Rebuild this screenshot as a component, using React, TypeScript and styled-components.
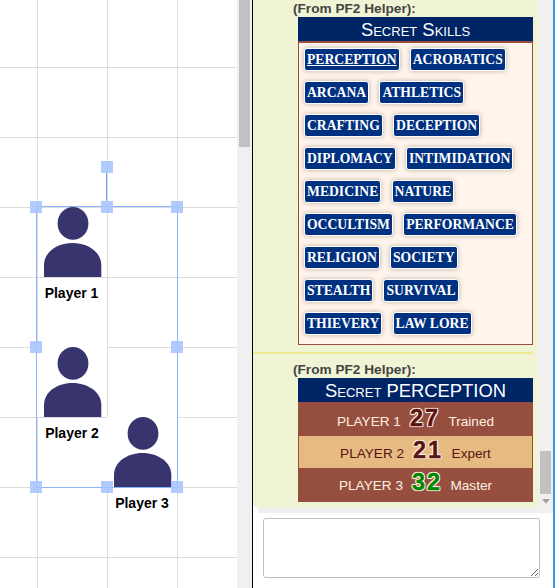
import React from "react";
import styled, { createGlobalStyle } from "styled-components";

const GlobalStyle = createGlobalStyle`
  * { box-sizing: border-box; }
  body { margin: 0; background: #fff; font-family: "Liberation Sans", Arial, sans-serif; }
`;

const Page = styled.div`
  display: flex;
  width: 555px;
  height: 588px;
  overflow: hidden;
`;

const Board = styled.div`
  position: relative;
  flex: 0 0 237px;
  overflow: hidden;
  background-color: #fff;
  background-image:
    linear-gradient(to right, #dcdcdc 1px, transparent 1px),
    linear-gradient(to bottom, #dcdcdc 1px, transparent 1px);
  background-size: 70px 70px;
  background-position: 37px 67px;
`;

const Token = styled.div<{ $x: number; $y: number; $opaque?: boolean }>`
  position: absolute;
  left: ${(p) => p.$x}px;
  top: ${(p) => p.$y}px;
  width: 70px;
  height: 70px;
  background: ${(p) => (p.$opaque ? "#fff" : "transparent")};
  svg { display: block; }
`;

const TokenName = styled.div`
  padding-top: 8px;
  font-size: 14px;
  line-height: 16px;
  font-weight: bold;
  text-align: center;
  white-space: nowrap;
  color: #000;
`;

const Selection = styled.div`
  position: absolute;
  left: 36px;
  top: 206px;
  width: 142px;
  height: 282px;
  border: 1px solid #8db3fb;
`;

const Stalk = styled.div`
  position: absolute;
  left: 106px;
  top: 173px;
  width: 1px;
  height: 28px;
  background: #71a0fa;
`;

const Handle = styled.div<{ $x: number; $y: number }>`
  position: absolute;
  left: ${(p) => p.$x}px;
  top: ${(p) => p.$y}px;
  width: 12px;
  height: 12px;
  background: rgba(166, 196, 254, 0.88);
`;

const BoardScroll = styled.div`
  flex: 0 0 15px;
  padding: 0 2px;
  background: #f0f0f0;
`;

const BoardThumb = styled.div`
  height: 147px;
  background: #c1c1c1;
`;

const Sidebar = styled.div`
  flex: 1;
  display: flex;
  flex-direction: column;
  border-left: 1px solid #000;
  border-right: 2px solid #3399ea;
`;

const ChatArea = styled.div`
  display: flex;
  height: 513px;
  background: linear-gradient(#fff, #fff) 0 100% / 5px 9px no-repeat #f0f0f0;
`;

const Messages = styled.div`
  width: 285px;
  height: 508px;
  background: #f0f4d4;
  border-radius: 0 0 0 5px;
`;

const Message = styled.section<{ $second?: boolean }>`
  width: 280px;
  height: ${(p) => (p.$second ? "154px" : "354px")};
  padding: ${(p) => (p.$second ? "7px" : "0")} 0 0 45px;
  border-bottom: ${(p) => (p.$second ? "0" : "2px solid #efeb8e")};
`;

const Sender = styled.div`
  height: 17px;
  margin-left: -5px;
  font-size: 13.65px;
  line-height: 18px;
  font-weight: bold;
  color: #444;
`;

const CardTitle = styled.h2`
  height: 24px;
  margin: 0;
  font-size: 18.4px;
  line-height: 26px;
  font-weight: normal;
  font-variant: small-caps;
  text-align: center;
  color: #fff;
  background: #002566;
`;

const SkillList = styled.div`
  display: flex;
  flex-direction: column;
  gap: 10px;
  height: 304px;
  padding: 5px 5px 0;
  border: 1px solid #964f3e;
  border-top-width: 2px;
  background: #fff5ec;
`;

const SkillRow = styled.div`
  display: flex;
  gap: 10.2px;
`;

const Skill = styled.span<{ $active?: boolean }>`
  height: 23px;
  padding: 0 2px;
  border: 1px solid #fff;
  border-radius: 3px;
  font: bold 13.67px/21px "Liberation Serif", "Times New Roman", serif;
  white-space: nowrap;
  text-decoration: ${(p) => (p.$active ? "underline" : "none")};
  color: #fff;
  background: #003080;
  box-shadow: 0 0 5px rgba(60, 50, 40, 0.35);
`;

const Results = styled.div`
  border: 1px solid #964f3e;
  border-top: 0;
`;

const Result = styled.div<{ $light?: boolean; $height: number; $line: number }>`
  display: flex;
  justify-content: center;
  align-items: baseline;
  height: ${(p) => p.$height}px;
  font-size: 13.6px;
  line-height: ${(p) => p.$line}px;
  color: ${(p) => (p.$light ? "#5b1212" : "#fff0e2")};
  background: ${(p) => (p.$light ? "#e5bb82" : "#964f3e")};
`;

const Score = styled.strong<{ $critical?: boolean }>`
  margin: 0 8.5px 0 9px;
  font-size: 23.4px;
  letter-spacing: 2px;
  color: ${(p) => (p.$critical ? "#008800" : "#5b1212")};
  -webkit-text-stroke: 0.4px ${(p) => (p.$critical ? "#008800" : "#5b1212")};
  text-shadow: -1px 0 1px #fff0e2, 1px 0 1px #fff0e2, 0 -1px 1px #fff0e2, 0 1px 1px #fff0e2,
    -1px -1px 0 #fff0e2, 1px -1px 0 #fff0e2, -1px 1px 0 #fff0e2, 1px 1px 0 #fff0e2;
`;

const ChatScroll = styled.div`
  display: flex;
  flex-direction: column;
  align-items: center;
  justify-content: flex-end;
  flex: 1;
  padding-bottom: 9px;
`;

const ChatThumb = styled.div`
  width: 11px;
  height: 43px;
  margin-bottom: 5px;
  background: #c1c1c1;
`;

const Composer = styled.div`
  flex: 1;
  padding: 5px 0 0 10px;
  background: #fff;
`;

const Input = styled.textarea`
  display: block;
  width: 277px;
  height: 60px;
  border: 1px solid #bfbfbf;
  border-radius: 3px;
  outline: 0;
  resize: both;
`;

const skillRows = [
  ["PERCEPTION", "ACROBATICS"],
  ["ARCANA", "ATHLETICS"],
  ["CRAFTING", "DECEPTION"],
  ["DIPLOMACY", "INTIMIDATION"],
  ["MEDICINE", "NATURE"],
  ["OCCULTISM", "PERFORMANCE"],
  ["RELIGION", "SOCIETY"],
  ["STEALTH", "SURVIVAL"],
  ["THIEVERY", "LAW LORE"],
];

const players = [
  { name: "Player 1", x: 36.5, y: 207, opaque: false },
  { name: "Player 2", x: 37, y: 347, opaque: true },
  { name: "Player 3", x: 107, y: 417, opaque: true },
];

const results = [
  { name: "PLAYER 1", score: 27, rank: "Trained", height: 34, line: 32 },
  { name: "PLAYER 2", score: 21, rank: "Expert", light: true, height: 32, line: 28 },
  { name: "PLAYER 3", score: 32, rank: "Master", critical: true, height: 33, line: 28 },
];

const handles = [
  [100.6, 161], [30.4, 201], [100.6, 201], [171, 201],
  [30.4, 341], [171, 341], [30.4, 481], [100.6, 481], [171, 481],
];

function Person() {
  return (
    <svg width="70" height="70" viewBox="0 0 70 70" fill="#37346e">
      <ellipse cx="36" cy="16.4" rx="15.4" ry="16.4" />
      <path d="M7 70V58C7 45.5 19.5 36 35.5 36S64.3 45.5 64.3 58V70Z" />
    </svg>
  );
}

export default function App() {
  return (
    <>
      <GlobalStyle />
      <Page>
        <Board>
          {players.map((p) => (
            <Token key={p.name} $x={p.x} $y={p.y} $opaque={p.opaque}>
              <Person />
              <TokenName>{p.name}</TokenName>
            </Token>
          ))}
          <Selection />
          <Stalk />
          {handles.map(([x, y]) => <Handle key={`${x}-${y}`} $x={x} $y={y} />)}
        </Board>
        <BoardScroll><BoardThumb /></BoardScroll>
        <Sidebar>
          <ChatArea>
            <Messages>
              <Message>
                <Sender>(From PF2 Helper):</Sender>
                <CardTitle>Secret Skills</CardTitle>
                <SkillList>
                  {skillRows.map((row) => (
                    <SkillRow key={row[0]}>
                      {row.map((s) => <Skill key={s} $active={s === "PERCEPTION"}>{s}</Skill>)}
                    </SkillRow>
                  ))}
                </SkillList>
              </Message>
              <Message $second>
                <Sender>(From PF2 Helper):</Sender>
                <CardTitle>Secret PERCEPTION</CardTitle>
                <Results>
                  {results.map((r) => (
                    <Result key={r.name} $light={r.light} $height={r.height} $line={r.line}>
                      <span>{r.name}</span>
                      <Score $critical={r.critical}>{r.score}</Score>
                      <span>{r.rank}</span>
                    </Result>
                  ))}
                </Results>
              </Message>
            </Messages>
            <ChatScroll>
              <ChatThumb />
              <svg width="8" height="5" viewBox="0 0 8 5"><path d="M0 0H8L4 4.5Z" fill="#a0a0a0" /></svg>
            </ChatScroll>
          </ChatArea>
          <Composer><Input aria-label="Chat message" /></Composer>
        </Sidebar>
      </Page>
    </>
  );
}
